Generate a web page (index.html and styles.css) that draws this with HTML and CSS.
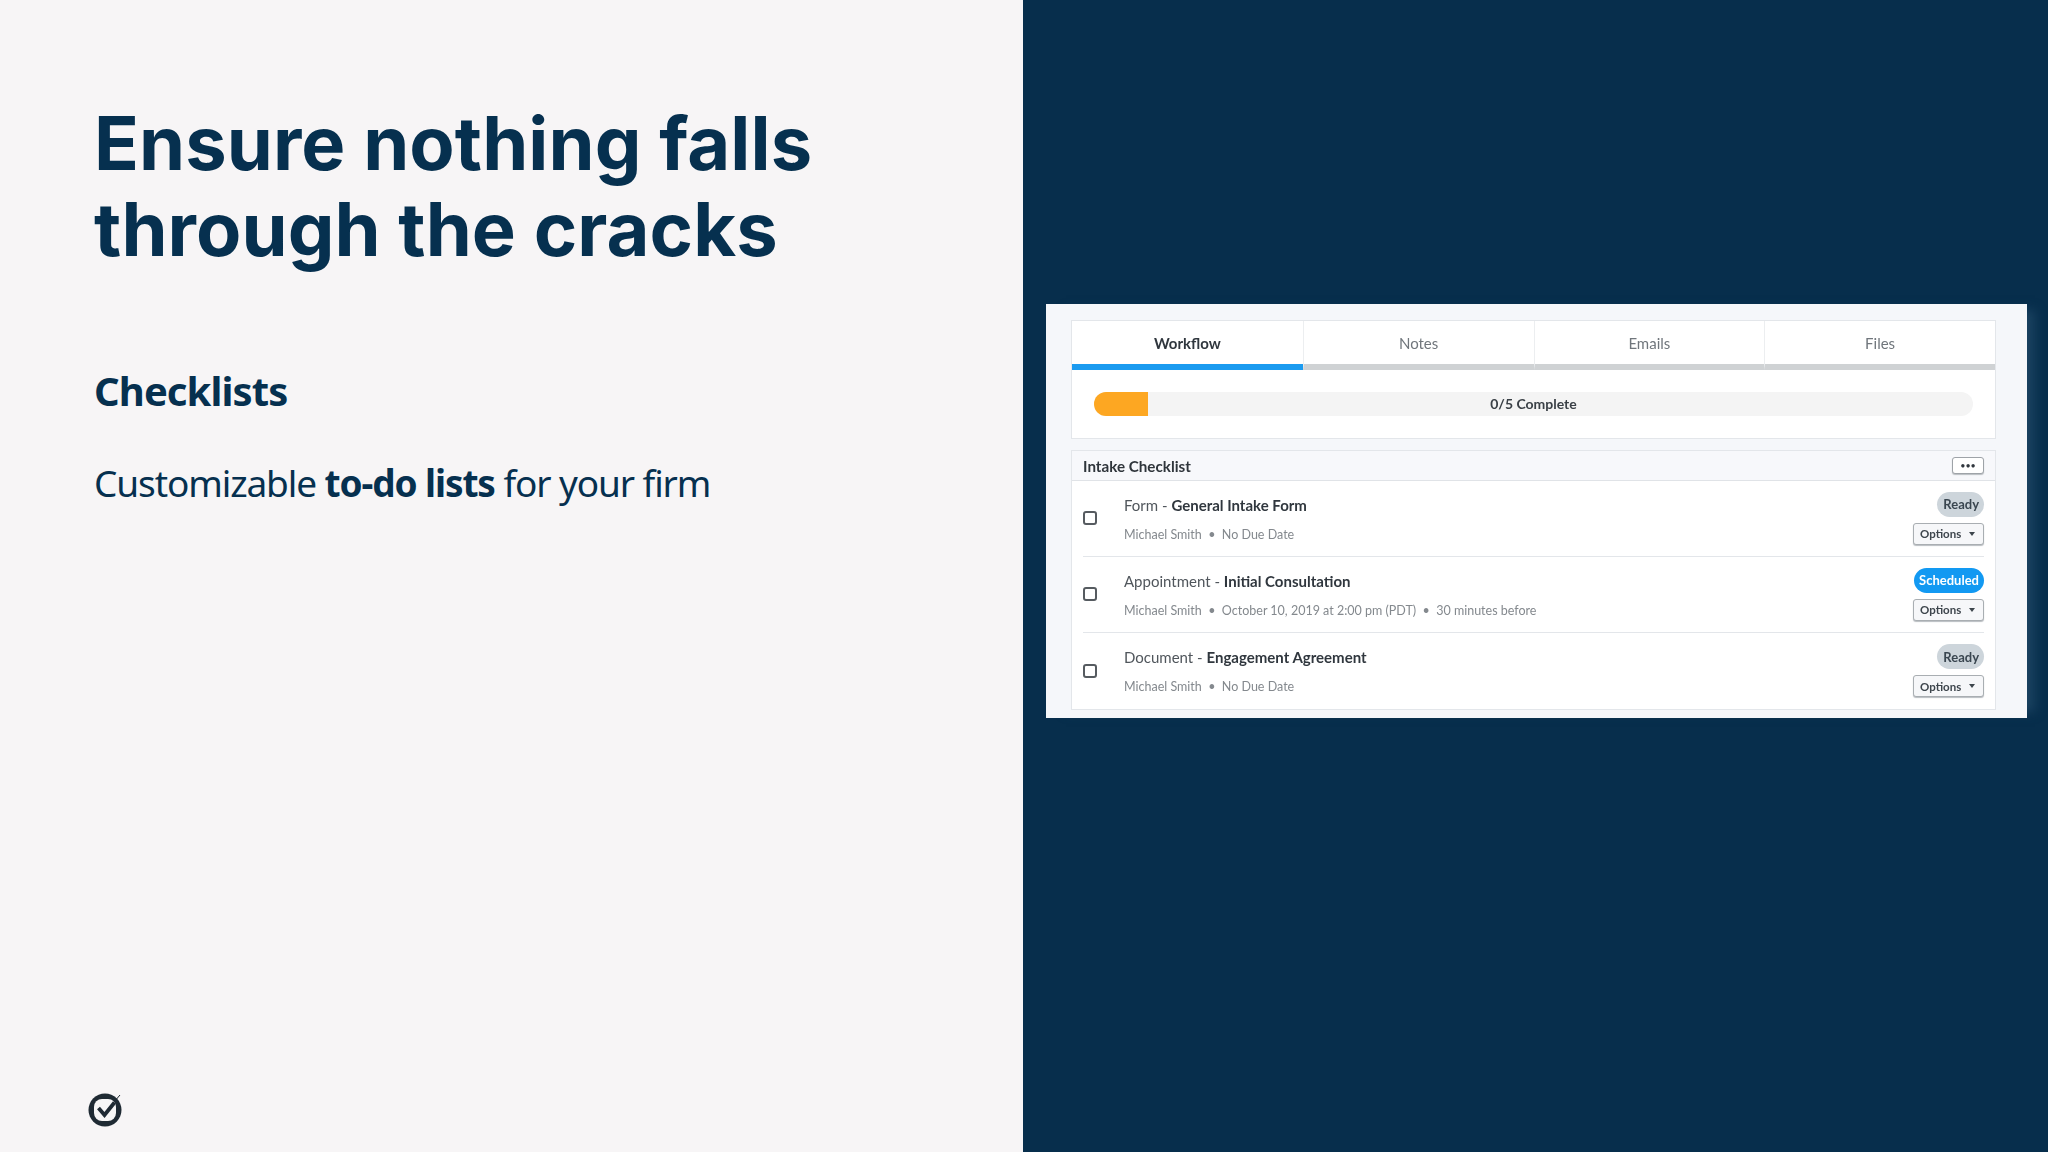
FILE: index.html
```html
<!DOCTYPE html>
<html lang="en">
<head>
<meta charset="utf-8">
<title>Ensure nothing falls through the cracks</title>
<link rel="stylesheet" href="styles.css">
</head>
<body>
<main class="slide">
  <section class="copy">
    <h1 class="title">Ensure nothing falls<br>through the cracks</h1>
    <h2 class="subtitle">Checklists</h2>
    <p class="lead">Customizable <strong>to-do lists</strong> for your firm</p>
    <svg class="logo" width="34" height="36" viewBox="0 0 34 36" aria-label="Logo">
      <circle cx="17" cy="19" r="16.5" fill="#1f2a33"/>
      <rect x="6" y="8" width="22" height="22" rx="8" fill="#f7f6f6"/>
      <path d="M10.5 17 L16.5 24 L26.5 11.5" fill="none" stroke="#1f2a33" stroke-width="3.8"/>
      <path d="M26 11 L32 4" fill="none" stroke="#1f2a33" stroke-width="1"/>
    </svg>
  </section>
  <section class="stage">
    <div class="shot">
      <div class="panel">
        <nav class="tabs">
          <div class="tab active">Workflow</div>
          <div class="tab">Notes</div>
          <div class="tab">Emails</div>
          <div class="tab">Files</div>
        </nav>
        <div class="progress-wrap">
          <div class="progress"><span class="fill"></span><span class="progress-label">0/5 Complete</span></div>
        </div>
      </div>
      <div class="list">
        <header class="list-head">
          <span class="list-title">Intake Checklist</span>
          <span class="more">•••</span>
        </header>
        <div class="row">
          <span class="check"></span>
          <div class="info">
            <div class="name">Form - <b>General Intake Form</b></div>
            <div class="meta">Michael Smith &nbsp;•&nbsp; No Due Date</div>
          </div>
          <div class="actions">
            <span class="badge">Ready</span>
            <span class="options">Options <i class="caret"></i></span>
          </div>
        </div>
        <div class="row">
          <span class="check"></span>
          <div class="info">
            <div class="name">Appointment - <b>Initial Consultation</b></div>
            <div class="meta">Michael Smith &nbsp;•&nbsp; October 10, 2019 at 2:00 pm (PDT) &nbsp;•&nbsp; 30 minutes before</div>
          </div>
          <div class="actions">
            <span class="badge blue">Scheduled</span>
            <span class="options">Options <i class="caret"></i></span>
          </div>
        </div>
        <div class="row">
          <span class="check"></span>
          <div class="info">
            <div class="name">Document - <b>Engagement Agreement</b></div>
            <div class="meta">Michael Smith &nbsp;•&nbsp; No Due Date</div>
          </div>
          <div class="actions">
            <span class="badge">Ready</span>
            <span class="options">Options <i class="caret"></i></span>
          </div>
        </div>
      </div>
    </div>
  </section>
</main>
</body>
</html>
```
FILE: styles.css
```css
* { box-sizing: border-box; }
html, body { margin: 0; height: 100%; }
body { background: #072e4c; overflow: hidden; }
.slide { display: grid; grid-template-columns: 1023px 1fr; height: 1152px; }

.copy { background: #f7f5f6; color: #06304f; padding: 100px 0 0 94px; position: relative; display: flex; flex-direction: column; }
.title { margin: 0; font: 700 74px/86px Inter, sans-serif; letter-spacing: 0.1px; }
.subtitle { margin: 91px 0 0; font: 700 40px/56px "Noto Sans", sans-serif; letter-spacing: -0.9px; }
.lead { margin: 38px 0 0; font: 400 37px/52px "Noto Sans", sans-serif; letter-spacing: -1.1px; }
.lead strong { font-weight: 700; }
.logo { position: absolute; left: 88px; bottom: 25px; }

.stage { padding: 304px 0 0 23px; }
.shot { width: 981px; height: 414px; background: #f5f7fa; padding: 17px 32px 0 26px; font-family: Lato, sans-serif; color: #30373e; filter: blur(.35px); box-shadow: 14px 0 10px -6px #1a4260; }
.panel { height: 117px; background: #fff; box-shadow: 0 0 0 1px #e3e6ea; }
.tabs { display: grid; grid-template-columns: repeat(4, 1fr); height: 49px; }
.tab { display: flex; align-items: center; justify-content: center; font-size: 15px; color: #70767c; background: #fff; border-bottom: 6px solid #cfd2d4; border-left: 1px solid #eceef0; padding-top: 1px; }
.tab.active { color: #30373e; font-weight: 700; border-bottom-color: #1b9bf0; border-left: 0; }
.progress-wrap { padding: 22px 22px 0; }
.progress { position: relative; display: flex; align-items: center; justify-content: center; height: 24px; border-radius: 12px; background: #f4f4f4; overflow: hidden; }
.fill { position: absolute; left: 0; top: 0; bottom: 0; width: 54px; background: #fda722; }
.progress-label { font-size: 14px; font-weight: 700; color: #3a4046; margin-top: -1px; }

.list { margin-top: 13px; height: 258px; background: #fff; box-shadow: 0 0 0 1px #e3e6ea; }
.list-head { display: flex; align-items: center; justify-content: space-between; height: 30px; padding: 0 11px; background: #f7f8fb; border-bottom: 1px solid #e0e3e7; }
.list-title { font-size: 15.2px; font-weight: 700; color: #2f353b; }
.more { display: flex; align-items: center; justify-content: center; width: 32px; height: 17px; border: 1px solid #9ea3a8; border-radius: 3px; background: #fff; font-size: 9px; letter-spacing: 0; color: #30373e; box-shadow: 0 1px 1px #b9bdc1; }
.row { display: flex; align-items: center; height: 76px; margin: 0 11px; border-bottom: 1px solid #e3e6ea; }
.row:last-child { border-bottom: 0; }
.check { width: 14px; height: 14px; margin-top: -1px; border: 2px solid #565b60; border-radius: 3px; flex: none; }
.info { flex: 1; margin-left: 27px; display: flex; flex-direction: column; gap: 13px; margin-top: 1px; }
.name { font-size: 15px; line-height: 18px; color: #50565c; }
.name b { font-weight: 700; color: #30373e; }
.meta { font-size: 12.5px; line-height: 16px; color: #84898e; }
.actions { display: flex; flex-direction: column; align-items: flex-end; gap: 6px; margin-top: -1px; }
.badge { display: flex; align-items: center; height: 25px; padding: 0 5px 0 6px; border-radius: 13px; background: #cdd5db; font-size: 13px; font-weight: 700; color: #3a4650; }
.badge.blue { background: #1299f2; color: #fff; padding: 0 5px; }
.options { display: flex; align-items: center; justify-content: space-between; width: 71px; height: 22px; padding: 0 8px 0 6px; border: 1px solid #a9aeb2; border-radius: 3px; background: #f6f7f9; font-size: 11.5px; font-weight: 700; color: #3d454c; box-shadow: 0 1px 1px #b9bdc1; }
.caret { width: 0; height: 0; border-left: 3.5px solid transparent; border-right: 3.5px solid transparent; border-top: 4px solid #3d454c; }
```
